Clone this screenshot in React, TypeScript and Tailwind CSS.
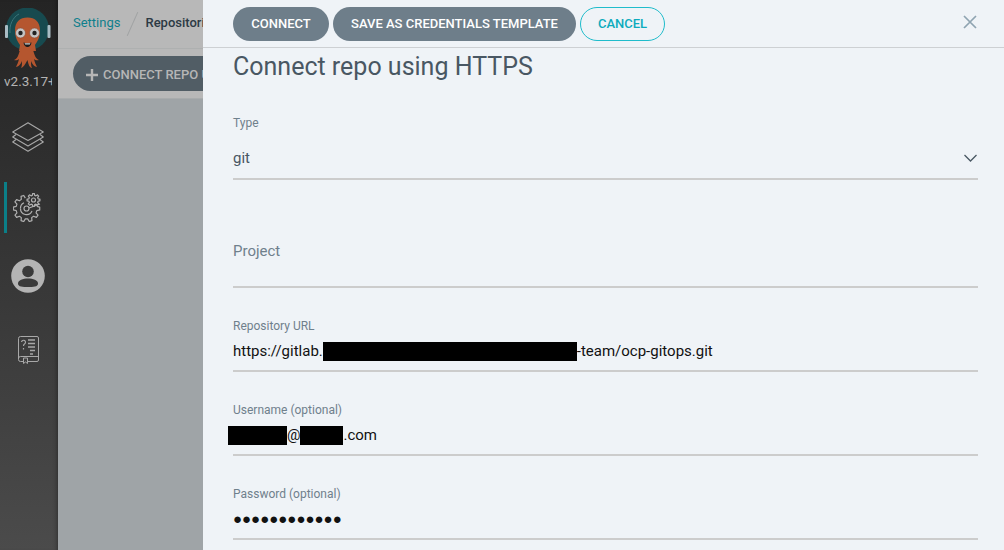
import React from "react";

const font = { fontFamily: "Roboto, sans-serif" };

function gearPath(cx: number, cy: number, rOut: number, rIn: number, teeth: number, skipFrom?: number, skipTo?: number) {
  const parts: string[] = [];
  const step = (Math.PI * 2) / teeth;
  let pen = false;
  for (let i = 0; i < teeth; i++) {
    const a = i * step;
    const deg = (a * 180) / Math.PI;
    if (skipFrom !== undefined && skipTo !== undefined && deg >= skipFrom && deg <= skipTo) {
      pen = false;
      continue;
    }
    const pts: [number, number][] = [
      [rIn, a - step * 0.32],
      [rOut, a - step * 0.17],
      [rOut, a + step * 0.17],
      [rIn, a + step * 0.32],
    ];
    for (const [r, t] of pts) {
      const x = (cx + r * Math.cos(t)).toFixed(2);
      const y = (cy + r * Math.sin(t)).toFixed(2);
      parts.push(`${pen ? "L" : "M"}${x} ${y}`);
      pen = true;
    }
  }
  if (skipFrom === undefined) parts.push("Z");
  return parts.join(" ");
}

function Logo() {
  return (
    <svg width="46" height="60" viewBox="0 0 46 60" className="block">
      <circle cx="22.500" cy="21" r="21.500" fill="#174a4f" />
      <rect x="0" y="17" width="3" height="13" rx="1" fill="#a9bcc4" />
      <rect x="42.500" y="17" width="3" height="13" rx="1" fill="#a9bcc4" />
      <path d="M5 25C4 17 8 9 14 6" fill="none" stroke="#3d7378" strokeWidth="1" />
      <path d="M10 22C10 14 15 9.500 22.500 9.500S35 14 35 22c0 8-3 12-5 15l1 6H14l1-6c-2-3-5-7-5-15z" fill="#b5562f" />
      <path d="M15 41c-1 6-3 10-6 11 2 .6 4 0 5-1-.6 3-2 6-3 8 2 0 5-3 6-6 0 3 0 5-1 7 2-.5 4-3 6.500-8 1 5 2 7.500 4.500 8-1-2-1-4-1-7 1 3 4 6 6 6-1-2-2.400-5-3-8 1 1 3 1.600 5 1-3-1-5-5-6-11z" fill="#b5562f" />
      <circle cx="15.500" cy="25" r="5" fill="#c4c4c4" stroke="#8c4a30" strokeWidth="0.600" />
      <circle cx="29.500" cy="25" r="5" fill="#c4c4c4" stroke="#8c4a30" strokeWidth="0.600" />
      <circle cx="15.500" cy="25" r="2.200" fill="#222" />
      <circle cx="29.500" cy="25" r="2.200" fill="#222" />
      <path d="M18.500 34.500c2 .8 6 .8 8 0-.6 3.500-2.500 4.500-4 4.500s-3.400-1-4-4.500z" fill="#1b1b1b" />
      <path d="M19.500 35.200h6l-.7 1.300h-4.600z" fill="#d0d0d0" />
    </svg>
  );
}

function Stack() {
  return (
    <svg width="32" height="30" viewBox="0 0 32 30" fill="none" stroke="#a8a8a8" strokeWidth="1.100" strokeLinejoin="round" className="block">
      <path d="M16 .7 31.300 10 16 18.500 .7 10z" />
      <path d="M4 12.500 .7 15 16 24 31.300 15 28 12.500" />
      <path d="M4 17.500 .7 20 16 29.300 31.300 20 28 17.500" />
    </svg>
  );
}

function Gears() {
  return (
    <svg width="28" height="29" viewBox="0 0 28 29" fill="none" stroke="#b0b0b0" strokeWidth="1.200" strokeLinejoin="round" className="block">
      <path d={gearPath(13.500, 15.500, 13.300, 10.500, 10, 280, 350)} />
      <path d="M7.500 15.500a6 6 0 0 0 11.500 2.500" />
      <path d="M11 9.800a6 6 0 0 0-3.500 5.700" />
      <circle cx="13.500" cy="15.500" r="2.500" />
      <path d="M16 15 27 11" />
      <path d={gearPath(20.500, 7, 6.500, 4.800, 8)} />
      <circle cx="20.500" cy="7" r="2" />
    </svg>
  );
}

function User() {
  return (
    <svg width="34" height="34" viewBox="0 0 34 34" className="block">
      <circle cx="17" cy="17" r="16.800" fill="#b4b4b4" />
      <circle cx="17" cy="12.500" r="5.800" fill="#3a3a3a" />
      <path d="M7 24.500C7 21 12 19.500 17 19.500S27 21 27 24.500 22 28 17 28 7 28 7 24.500z" fill="#3a3a3a" />
    </svg>
  );
}

function Book() {
  return (
    <svg width="21" height="28" viewBox="0 0 21 28" fill="none" stroke="#a8a8a8" strokeWidth="1" className="block">
      <path d="M2.500.5H19a1.500 1.500 0 0 1 1.500 1.500V24a1.500 1.500 0 0 1-1.500 1.500H2.500a2 2 0 0 1-2-2V2.500a2 2 0 0 1 2-2z" />
      <path d="M.5 22.500a2 2 0 0 1 2-2h18" />
      <path d="M5.500 22v5.500l2-1.500 2 1.500V22z" fill="#404040" />
      <path d="M10 4h7M10 7.500h7M10 11h7M12 14.500h5M12 18h3" strokeWidth="1.300" />
      <path d="M3.500 6a2 2 0 1 1 3 2c-1 .6-1 1-1 2M5.500 12v1.500" strokeWidth="1.200" />
    </svg>
  );
}

function Redact({ w }: { w: string }) {
  return <span className={`inline-block h-[19px] bg-black align-[-5px] ${w}`} />;
}

function Field({ label, children, className }: { label: string; children: React.ReactNode; className: string }) {
  return (
    <div className={`flex flex-col border-b-2 border-[#cccccc] ${className}`}>
      <div className="text-[12px] leading-[14px] text-[#6f808c]">{label}</div>
      <div className="mt-[6px] text-[15px] leading-[24px] text-[#111111]">{children}</div>
    </div>
  );
}

export default function App() {
  return (
    <div className="relative flex h-[550px] w-[1004px] overflow-hidden" style={font}>
      <aside className="flex w-[58px] shrink-0 flex-col items-center bg-gradient-to-b from-[#242424] to-[#4b4b4b] pr-[2px] shadow-[inset_-4px_0_4px_-3px_rgba(0,0,0,0.35)]">
        <div className="mt-[8px]"><Logo /></div>
        <div className="mt-[5px] w-[48px] overflow-hidden whitespace-nowrap text-[13.500px] leading-[16px] text-[#b4b4b4]">v2.3.17+</div>
        <div className="mt-[33px]"><Stack /></div>
        <div className="relative mt-[30px] flex h-[51px] w-[58px] items-center justify-center pr-[2px]">
          <div className="absolute left-[5px] top-0 h-[51px] w-[3px] bg-[#0b7f88]" />
          <Gears />
        </div>
        <div className="mt-[26px]"><User /></div>
        <div className="mt-[43px]"><Book /></div>
      </aside>

      <main className="flex min-w-0 flex-1 flex-col bg-[#9fa4a7]">
        <div className="flex h-[49px] shrink-0 items-center border-b border-[#aeb0b0] bg-[#b8b8b8] pb-[2px] pl-[15px] text-[13px] whitespace-nowrap">
          <span className="text-[#0f7f8c]">Settings</span>
          <span className="mx-[12px] mt-[2px] h-[26px] w-px rotate-[24deg] bg-[#a0a2a3]" />
          <span className="font-medium text-[#2d3a44]">Repositories</span>
        </div>
        <div className="flex h-[50px] shrink-0 items-center border-b border-[#a9acad] bg-[#b8b8b8] pl-[15px]">
          <button className="flex h-[35px] items-center gap-[5px] rounded-[18px] bg-[#515d65] pl-[13px] pr-[18px] pt-[2px] text-[13px] font-medium whitespace-nowrap text-[#b6b6b6]">
            <svg width="12" height="12" viewBox="0 0 12 12" fill="#b6b6b6"><path d="M4.800 0h2.400v4.800H12v2.400H7.200V12H4.800V7.200H0V4.800h4.800z" /></svg>
            CONNECT REPO USING HTTPS
          </button>
        </div>
      </main>

      <section className="absolute inset-y-0 left-[203px] right-0 flex flex-col bg-[#eff3f7]">
        <header className="flex h-[48px] shrink-0 items-center border-b border-[#cdd0d3] pl-[30px] pr-[27px]">
          <div className="flex gap-[4px]">
            <button className="h-[34px] w-[96px] rounded-[17px] bg-[#6e7e8a] text-[13px] font-medium text-white">CONNECT</button>
            <button className="h-[34px] w-[243px] rounded-[17px] bg-[#6e7e8a] text-[13px] font-medium text-white">SAVE AS CREDENTIALS TEMPLATE</button>
            <button className="h-[34px] w-[85px] rounded-[17px] border border-[#1fbccb] text-[13px] font-medium text-[#0dabbd]">CANCEL</button>
          </div>
          <svg className="ml-auto mb-[3px]" width="14" height="14" viewBox="0 0 14 14" stroke="#8fa4b1" strokeWidth="1.700"><path d="M1 1 13 13M13 1 1 13" /></svg>
        </header>

        <div className="flex flex-col pl-[30px] pr-[26px]">
          <h1 className="mt-[2px] h-[34px] text-[25px] leading-[34px] font-normal text-[#495763]">Connect repo using HTTPS</h1>

          <div className="mt-[32px] flex h-[64px] flex-col border-b-2 border-[#cccccc]">
            <div className="text-[12px] leading-[14px] text-[#6f808c]">Type</div>
            <div className="mt-[16px] flex items-center justify-between pr-[1px] text-[15px] leading-[24px] text-[#495763]">
              git
              <svg width="13" height="8" viewBox="0 0 13 8" fill="none" stroke="#495763" strokeWidth="1.300"><path d="M.5 1 6.500 7 12.500 1" /></svg>
            </div>
          </div>

          <div className="mt-[61px] h-[47px] border-b-2 border-[#cccccc] text-[15px] leading-[20px] text-[#6f808c]">Project</div>

          <Field label="Repository URL" className="mt-[31px] h-[53px]">
            https://gitlab.<Redact w="w-[254px]" />-team/ocp-gitops.git
          </Field>
          <Field label="Username (optional)" className="mt-[31px] h-[53px]">
            <span className="ml-[-5px]"><Redact w="w-[59px]" />@<Redact w="w-[43px]" />.com</span>
          </Field>
          <Field label="Password (optional)" className="mt-[31px] h-[53px]">
            <span style={{ fontFamily: "'Liberation Sans', sans-serif" }}>●●●●●●●●●●●●</span>
          </Field>
        </div>
      </section>
    </div>
  );
}
